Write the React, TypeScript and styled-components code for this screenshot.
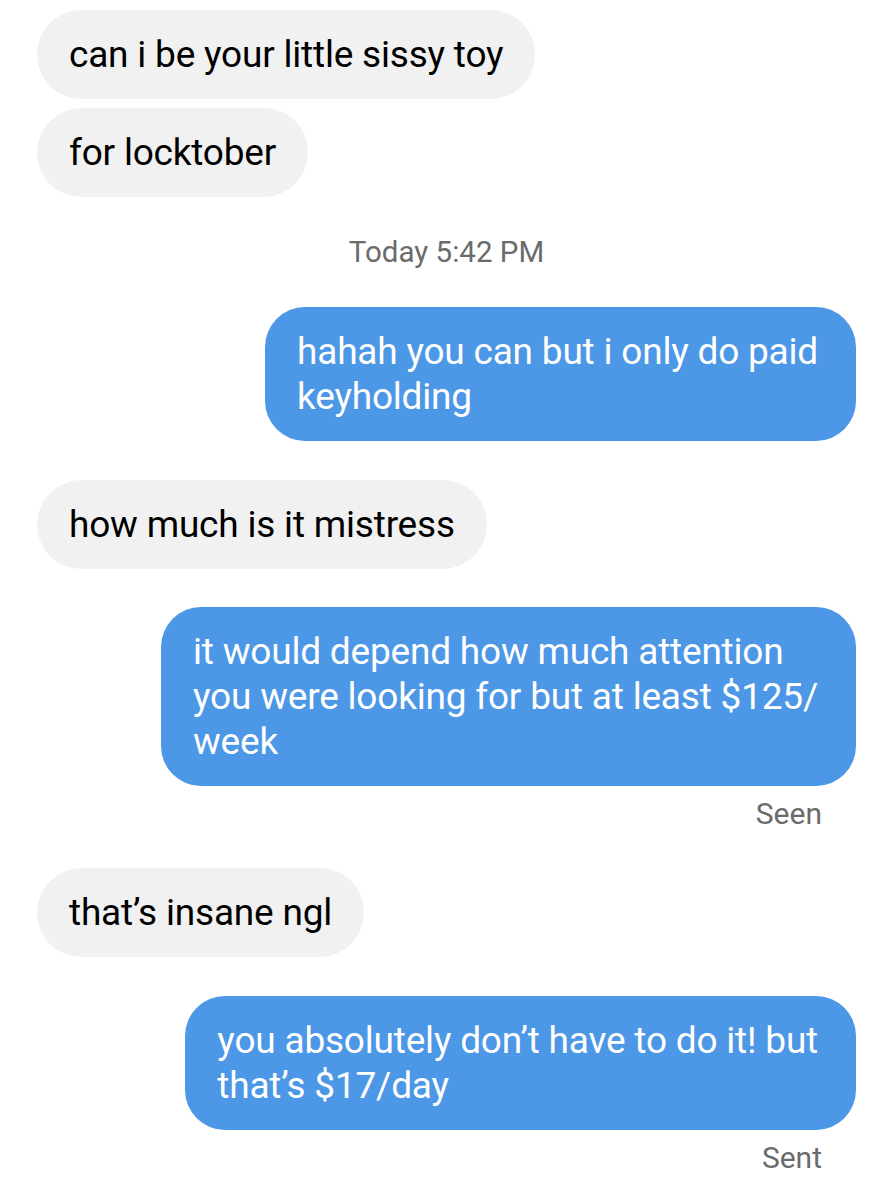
import React from "react";
import styled, { createGlobalStyle } from "styled-components";

const Global = createGlobalStyle`
  html, body { margin: 0; padding: 0; background: #ffffff; }
  body { font-family: Roboto, "Liberation Sans", sans-serif; -webkit-font-smoothing: antialiased; }
`;

const Thread = styled.div`
  display: flex;
  flex-direction: column;
  padding: 10px 37px 20px 37px;
  width: 893px;
  box-sizing: border-box;
`;

const Row = styled.div<{ $mine?: boolean; $gap: number }>`
  display: flex;
  justify-content: ${(p) => (p.$mine ? "flex-end" : "flex-start")};
  margin-top: ${(p) => p.$gap}px;
`;

const Bubble = styled.div<{ $mine?: boolean }>`
  box-sizing: border-box;
  padding: ${(p) => (p.$mine ? "22px 38px 22px 32px" : "22px 32px")};
  border-radius: ${(p) => (p.$mine ? "40px" : "45px")};
  background: ${(p) => (p.$mine ? "#4c97e6" : "#f1f1f1")};
  color: ${(p) => (p.$mine ? "#ffffff" : "#000000")};
  font-size: 37px;
  line-height: 45px;
  white-space: nowrap;
  letter-spacing: -0.2px;
`;

const Stamp = styled.div`
  text-align: center;
  color: #6b6b6b;
  font-size: 29.5px;
  line-height: 30px;
  margin: 40px 0 40px 0;
`;

const Status = styled.div<{ $gap: number }>`
  align-self: flex-end;
  color: #6b6b6b;
  font-size: 30px;
  line-height: 30px;
  margin-top: ${(p) => p.$gap}px;
  padding-right: 34px;
`;

export default function App() {
  return (
    <>
      <Global />
      <Thread>
        <Row $gap={0}>
          <Bubble>can i be your little sissy toy</Bubble>
        </Row>
        <Row $gap={9}>
          <Bubble>for locktober</Bubble>
        </Row>
        <Stamp>Today 5:42 PM</Stamp>
        <Row $mine $gap={0}>
          <Bubble $mine>
            hahah you can but i only do paid
            <br />
            keyholding
          </Bubble>
        </Row>
        <Row $gap={39}>
          <Bubble>how much is it mistress</Bubble>
        </Row>
        <Row $mine $gap={38}>
          <Bubble $mine>
            it would depend how much attention
            <br />
            you were looking for but at least $125/
            <br />
            week
          </Bubble>
        </Row>
        <Status $gap={13}>Seen</Status>
        <Row $gap={39}>
          <Bubble>that’s insane ngl</Bubble>
        </Row>
        <Row $mine $gap={39}>
          <Bubble $mine>
            you absolutely don’t have to do it! but
            <br />
            that’s $17/day
          </Bubble>
        </Row>
        <Status $gap={13}>Sent</Status>
      </Thread>
    </>
  );
}
